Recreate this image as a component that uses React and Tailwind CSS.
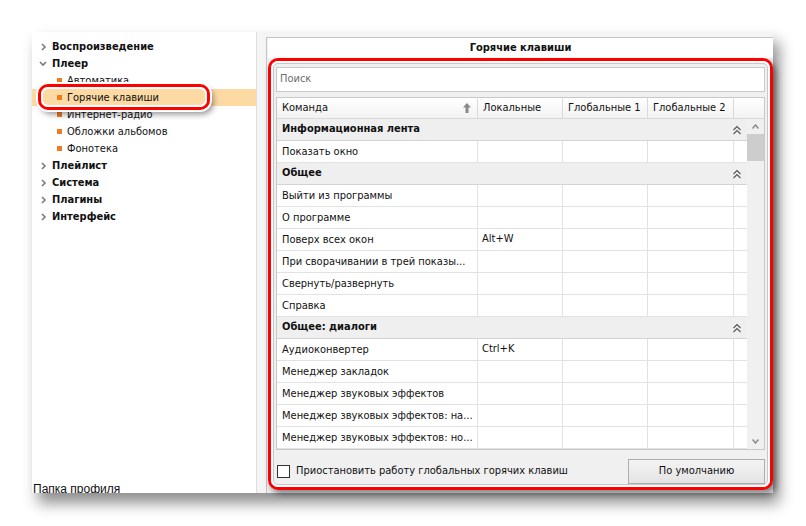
import React from "react";

const F = { fontFamily: '"DejaVu Sans Condensed", "DejaVu Sans", sans-serif' };

function ArrowRight() {
  return (
    <svg width="7" height="8" viewBox="0 0 7 8" className="shrink-0">
      <path d="M2 1 L5 4 L2 7" fill="none" stroke="#7a7a7a" strokeWidth="1.6" />
    </svg>
  );
}
function ArrowDown() {
  return (
    <svg width="8" height="7" viewBox="0 0 8 7" className="shrink-0">
      <path d="M1 2 L4 5 L7 2" fill="none" stroke="#7a7a7a" strokeWidth="1.6" />
    </svg>
  );
}
function DoubleUp() {
  return (
    <svg width="10" height="10" viewBox="0 0 10 10">
      <path d="M1.5 5 L5 1.5 L8.5 5 M1.5 9 L5 5.5 L8.5 9" fill="none" stroke="#555" strokeWidth="1.1" />
    </svg>
  );
}

const tree = [
  { t: "Воспроизведение", top: true, open: false },
  { t: "Плеер", top: true, open: true },
  { t: "Автоматика" },
  { t: "Горячие клавиши", sel: true },
  { t: "Интернет-радио" },
  { t: "Обложки альбомов" },
  { t: "Фонотека" },
  { t: "Плейлист", top: true },
  { t: "Система", top: true },
  { t: "Плагины", top: true },
  { t: "Интерфейс", top: true },
];

const rows = [
  { g: "Информационная лента" },
  { c: "Показать окно" },
  { g: "Общее" },
  { c: "Выйти из программы" },
  { c: "О программе" },
  { c: "Поверх всех окон", l: "Alt+W" },
  { c: "При сворачивании в трей показы..." },
  { c: "Свернуть/развернуть" },
  { c: "Справка" },
  { g: "Общее: диалоги" },
  { c: "Аудиоконвертер", l: "Ctrl+K" },
  { c: "Менеджер закладок" },
  { c: "Менеджер звуковых эффектов" },
  { c: "Менеджер звуковых эффектов: на..." },
  { c: "Менеджер звуковых эффектов: но..." },
];

export default function App() {
  return (
    <div className="relative h-[526px] w-[806px] overflow-hidden bg-white text-[11px] text-[#111]" style={F}>
      <div className="ml-[32px] mt-[32px] flex h-[461px] w-[741px] bg-[#f4f4f4] shadow-[6px_10px_14px_rgba(0,0,0,0.45)]">
        {/* left tree */}
        <div className="relative flex h-full w-[225px] shrink-0 flex-col overflow-hidden border-r border-[#dedede] bg-white">
          <div className="flex flex-col pt-[6px]">
            {tree.map((n, i) => (
              <div
                key={i}
                className={"flex h-[17px] items-center whitespace-nowrap " + (n.sel ? "bg-[#fdd9a3]" : "")}
              >
                {n.top ? (
                  <>
                    <div className="flex w-[20px] justify-center pl-[2px]">{n.open ? <ArrowDown /> : <ArrowRight />}</div>
                    <span className="font-bold leading-none">{n.t}</span>
                  </>
                ) : (
                  <>
                    <div className="ml-[25px] mr-[5px] h-[5px] w-[5px] bg-[#f07d1c]" />
                    <span className="leading-none">{n.t}</span>
                  </>
                )}
              </div>
            ))}
          </div>
          <div className="mt-auto mb-[-4px] pl-[1px] text-[12px] leading-[15px]" style={{ fontFamily: '"Liberation Sans", sans-serif' }}>
            Папка профиля
          </div>
          <div className="absolute left-[6px] top-[52px] h-[26px] w-[172px] rounded-[10px] border-[3px] border-[#ff0000] shadow-[0_0_0_2px_#ffffff,3px_4px_6px_rgba(0,0,0,0.45)]">
            <div className="h-full w-full rounded-[7px] border-2 border-white" />
          </div>
        </div>

        {/* right */}
        <div className="flex flex-1 flex-col pl-[9px] pt-[5px]">
          <div className="flex flex-1 flex-col border-l border-t border-[#c4c4c4] bg-[#f0f0f0] pl-[1px]">
            <div className="flex h-[20px] items-center justify-center bg-white font-bold">Горячие клавиши</div>
            <div className="mb-[3px] flex-1 rounded-[10px] border-[3px] border-[#ff0000] bg-[#f0f0f0] shadow-[3px_4px_6px_rgba(0,0,0,0.45)]">
              <div className="h-full w-full rounded-[7px] border-2 border-white">
                <div className="flex h-full flex-col rounded-[5px] border border-[#c8c8c8] bg-[#f0f0f0] px-[2px] pt-[3px]">
                  {/* search */}
                  <div className="flex h-[25px] items-center border border-[#c9c9c9] bg-white pl-[3px] text-[#6d6d6d]">Поиск</div>
                  {/* table */}
                  <div className="mt-[5px] flex flex-col border border-[#c8c8c8] bg-white">
                    <div className="flex h-[21px] whitespace-nowrap border-b border-[#d8d8d8] bg-gradient-to-b from-white to-[#f2f2f2]">
                      <div className="relative flex w-[201px] items-center border-r border-[#dadada] pl-[5px]">
                        Команда
                        <svg className="absolute right-[6px] top-[5px]" width="8" height="10" viewBox="0 0 8 10">
                          <path d="M4 0 L8 4.5 L5.5 4.5 L5.5 10 L2.5 10 L2.5 4.5 L0 4.5 Z" fill="#8a8a8a" />
                        </svg>
                      </div>
                      <div className="flex w-[85px] items-center border-r border-[#dadada] pl-[5px]">Локальные</div>
                      <div className="flex w-[85px] items-center border-r border-[#dadada] pl-[5px]">Глобальные 1</div>
                      <div className="flex w-[86px] items-center border-r border-[#dadada] pl-[5px]">Глобальные 2</div>
                      <div className="flex-1" />
                    </div>
                    <div className="flex">
                      <div className="flex flex-1 flex-col">
                        {rows.map((r, i) =>
                          r.g ? (
                            <div key={i} className="flex h-[22px] items-center justify-between border-b border-[#d4d4d4] bg-[#efefef] pl-[5px] pr-[5px] font-bold">
                              <span>{r.g}</span>
                              <DoubleUp />
                            </div>
                          ) : (
                            <div key={i} className="flex h-[22px] border-b border-[#e2e2e2]">
                              <div className="w-[201px] overflow-hidden text-ellipsis whitespace-nowrap border-r border-[#e2e2e2] pl-[5px] pr-[2px] leading-[21px]">{r.c}</div>
                              <div className="flex w-[85px] items-center border-r border-[#e2e2e2] pl-[4px]">{r.l || ""}</div>
                              <div className="w-[85px] border-r border-[#e2e2e2]" />
                              <div className="w-[86px] border-r border-[#e2e2e2]" />
                              <div className="flex-1" />
                            </div>
                          )
                        )}
                      </div>
                      {/* scrollbar */}
                      <div className="flex w-[17px] flex-col items-center bg-[#f0f0f0]">
                        <svg className="mt-[5px]" width="7" height="5" viewBox="0 0 7 5">
                          <path d="M0.5 4.5 L3.5 1 L6.5 4.5" fill="none" stroke="#8a8a8a" strokeWidth="1.5" />
                        </svg>
                        <div className="mt-[5px] h-[27px] w-full bg-[#cdcdcd]" />
                        <div className="flex-1" />
                        <svg className="mb-[5px]" width="7" height="5" viewBox="0 0 7 5">
                          <path d="M0.5 0.5 L3.5 4 L6.5 0.5" fill="none" stroke="#8a8a8a" strokeWidth="1.5" />
                        </svg>
                      </div>
                    </div>
                  </div>
                  {/* bottom */}
                  <div className="mt-[9px] flex items-center justify-between">
                    <div className="flex items-center">
                      <div className="ml-[1px] h-[13px] w-[13px] border border-[#333] bg-white" />
                      <span className="ml-[6px] whitespace-nowrap">Приостановить работу глобальных горячих клавиш</span>
                    </div>
                    <div className="flex h-[25px] w-[137px] items-center justify-center border border-[#adadad] bg-gradient-to-b from-[#f4f4f4] to-[#e4e4e4]">По умолчанию</div>
                  </div>
                </div>
              </div>
            </div>
          </div>
        </div>
      </div>
    </div>
  );
}
